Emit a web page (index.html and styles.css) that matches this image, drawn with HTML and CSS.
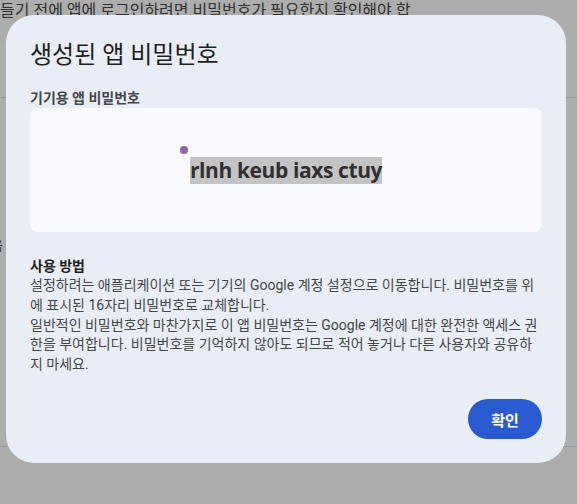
FILE: index.html
```html
<!DOCTYPE html>
<html lang="ko">
<head>
<meta charset="utf-8">
<title>생성된 앱 비밀번호</title>
<link rel="stylesheet" href="styles.css">
</head>
<body>
<div class="page">
  <p class="bg-line">들기 전에 앱에 로그인하려면 비밀번호가 필요한지 확인해야 합</p>
  <div class="bg-rule rule-1"></div>
  <p class="bg-char">음</p>
  <div class="bg-rule rule-2"></div>
</div>
<div class="scrim">
  <div class="dialog" role="dialog">
    <h2 class="dialog-title">생성된 앱 비밀번호</h2>
    <p class="label">기기용 앱 비밀번호</p>
    <div class="pw-card">
      <span class="pw"><span class="pw-dot"></span>rlnh keub iaxs ctuy</span>
    </div>
    <h3 class="howto-title">사용 방법</h3>
    <div class="howto">
      <p>설정하려는 애플리케이션 또는 기기의 Google 계정 설정으로 이동합니다. 비밀번호를 위에 표시된 16자리 비밀번호로 교체합니다.</p>
      <p>일반적인 비밀번호와 마찬가지로 이 앱 비밀번호는 Google 계정에 대한 완전한 액세스 권한을 부여합니다. 비밀번호를 기억하지 않아도 되므로 적어 놓거나 다른 사용자와 공유하지 마세요.</p>
    </div>
    <div class="actions">
      <button class="ok" type="button">확인</button>
    </div>
  </div>
</div>
</body>
</html>
```

FILE: styles.css
```css
html, body {
  margin: 0;
  padding: 0;
}
body {
  background: #adadad;
  font-family: "Roboto", "Noto Sans CJK KR", sans-serif;
  width: 577px;
  height: 504px;
  overflow: hidden;
}
.page {
  color: #303030;
}
.bg-line {
  margin: 0;
  font-size: 16px;
  line-height: 21px;
  white-space: nowrap;
}
.bg-rule {
  height: 1px;
  background: #9a9a9a;
}
.rule-1 {
  margin-top: 76px;
}
.bg-char {
  margin: 137px 0 0 -10px;
  font-size: 14px;
  line-height: 20px;
}
.rule-2 {
  margin-top: 191px;
}
.scrim {
  position: fixed;
  inset: 0;
  display: flex;
  align-items: flex-start;
  padding: 15px 0 0 6px;
}
.dialog {
  width: 560px;
  height: 448px;
  box-sizing: border-box;
  background: #e9eef6;
  border-radius: 28px;
  padding: 24px 24px 24px 24px;
  display: flex;
  flex-direction: column;
}
.dialog-title {
  margin: 0;
  font-size: 24px;
  line-height: 32px;
  font-weight: 400;
  color: #1f1f1f;
}
.label {
  margin: 17px 0 0;
  font-size: 14px;
  line-height: 20px;
  font-weight: 700;
  color: #444746;
}
.pw-card {
  height: 124px;
  background: #f8fafd;
  border-radius: 8px;
  display: flex;
  align-items: center;
  justify-content: center;
}
.pw {
  position: relative;
  font-family: "Open Sans", sans-serif;
  font-weight: 700;
  font-size: 21px;
  line-height: 27px;
  letter-spacing: -0.4px;
  color: #303030;
  background: #c4c4c4;
}
.pw-dot {
  position: absolute;
  left: -10px;
  top: -11px;
  width: 8px;
  height: 8px;
  border-radius: 50%;
  background: #8e63a8;
}
.howto-title {
  margin: 24px 0 0;
  font-size: 14px;
  line-height: 20px;
  font-weight: 700;
  color: #1f1f1f;
}
.howto {
  font-size: 14px;
  line-height: 19.8px;
  color: #444746;
}
.howto p {
  margin: 0;
}
.actions {
  margin-top: auto;
  display: flex;
  justify-content: flex-end;
}
.ok {
  width: 74px;
  height: 40px;
  border: 0;
  border-radius: 20px;
  background: #2a5ad0;
  color: #ffffff;
  font-family: "Roboto", "Noto Sans CJK KR", sans-serif;
  font-size: 15px;
  font-weight: 700;
  padding: 0;
}
```
